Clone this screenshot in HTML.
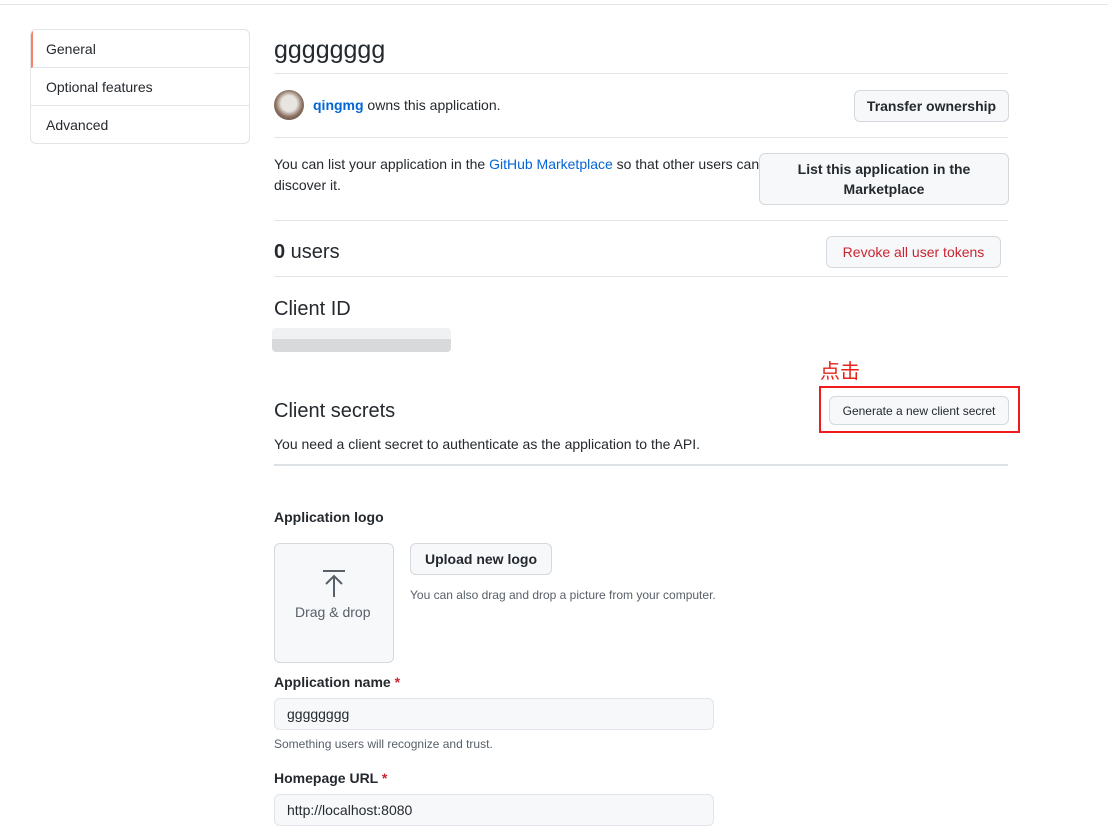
<!DOCTYPE html>
<html><head><meta charset="utf-8"><style>
*{box-sizing:border-box;margin:0;padding:0}
body{width:1108px;height:823px;overflow:hidden;background:#fff;font-family:"Liberation Sans",sans-serif;color:#24292e;font-size:14px;position:relative}
.a{position:absolute;white-space:nowrap}
.hr{position:absolute;left:274px;width:734px;height:1px;background:#e1e4e8}
.btn{position:absolute;background:#f6f8fa;border:1px solid #d5d8dc;border-radius:6px;font-weight:bold;font-size:14px;display:flex;align-items:center;justify-content:center;text-align:center;color:#24292e}
.side{position:absolute;left:30px;top:29px;width:220px;height:115px;border:1px solid #e1e4e8;border-radius:6px;overflow:hidden}
.side div{height:38px;line-height:38px;padding-left:15px;border-bottom:1px solid #e1e4e8;font-size:14px}
.side div:last-child{border-bottom:none}
.inp{position:absolute;left:274px;width:440px;height:32px;border:1px solid #e1e4e8;border-radius:6px;background:#f6f8fa;padding-left:12px;line-height:30px;font-size:14px}
</style></head><body>
<div class="a" style="left:0;top:4px;width:1108px;height:1px;background:#e5e5e5"></div>
<div class="side">
<div style="border-left:2px solid #f9826c;padding-left:13px">General</div>
<div>Optional features</div>
<div>Advanced</div>
</div>
<div class="a" style="left:274px;top:34px;font-size:25px;line-height:32px">gggggggg</div>
<div class="hr" style="top:73px"></div>
<div class="a" style="left:274px;top:90px;width:30px;height:30px;border-radius:50%;background:radial-gradient(circle at 50% 45%,#e8e4df 0 35%,#8a7060 60%,#4a3a30 100%)"></div>
<div class="a" style="left:313px;top:96px;line-height:18px"><b style="color:#0366d6">qingmg</b> owns this application.</div>
<div class="btn" style="left:854px;top:90px;width:155px;height:32px">Transfer ownership</div>
<div class="hr" style="top:137px"></div>
<div class="a" style="left:274px;top:154px;line-height:21px;white-space:normal;width:490px">You can list your application in the <span style="color:#0366d6">GitHub Marketplace</span> so that other users can discover it.</div>
<div class="btn" style="left:759px;top:153px;width:250px;height:52px;line-height:20px">List this application in the<br>Marketplace</div>
<div class="hr" style="top:220px"></div>
<div class="a" style="left:274px;top:240px;font-size:20px;line-height:24px"><b>0</b> users</div>
<div class="btn" style="left:826px;top:236px;width:175px;height:32px;color:#cb2431;font-weight:normal">Revoke all user tokens</div>
<div class="hr" style="top:276px"></div>
<div class="a" style="left:274px;top:297px;font-size:20px;line-height:24px">Client ID</div>
<div class="a" style="left:272px;top:328px;width:179px;height:24px;border-radius:4px;background:linear-gradient(#f0f1f2 0 45%,#d8d9db 45% 100%)"></div>
<div class="a" style="left:820px;top:358px;font-size:20px;line-height:24px;color:#e8231a;font-family:'Noto Sans CJK SC',sans-serif">点击</div>
<div class="a" style="left:819px;top:386px;width:201px;height:47px;border:2px solid #f01c1c"></div>
<div class="btn" style="left:829px;top:396px;width:180px;height:29px;font-size:12px;font-weight:normal">Generate a new client secret</div>
<div class="a" style="left:274px;top:399px;font-size:20px;line-height:24px">Client secrets</div>
<div class="a" style="left:274px;top:435px;line-height:18px">You need a client secret to authenticate as the application to the API.</div>
<div class="a" style="left:274px;top:464px;width:734px;height:2px;background:#dfe2e5"></div>
<div class="a" style="left:274px;top:508px;font-weight:bold;line-height:18px">Application logo</div>
<div class="a" style="left:274px;top:543px;width:120px;height:120px;border:1px solid #d5d8dc;border-radius:6px;background:#f6f8fa"></div>
<svg class="a" style="left:320px;top:569px" width="28" height="30" viewBox="0 0 28 30"><path d="M3 2H25M14 28V7M6 15L14 7L22 15" fill="none" stroke="#586069" stroke-width="2"/></svg>
<div class="a" style="left:295px;top:603px;color:#586069;line-height:18px">Drag &amp; drop</div>
<div class="btn" style="left:410px;top:543px;width:142px;height:32px">Upload new logo</div>
<div class="a" style="left:410px;top:587px;font-size:12px;color:#586069;line-height:16px">You can also drag and drop a picture from your computer.</div>
<div class="a" style="left:274px;top:673px;font-weight:bold;line-height:18px">Application name <span style="color:#cb2431">*</span></div>
<div class="inp" style="top:698px">gggggggg</div>
<div class="a" style="left:274px;top:736px;font-size:12px;color:#586069;line-height:16px">Something users will recognize and trust.</div>
<div class="a" style="left:274px;top:769px;font-weight:bold;line-height:18px">Homepage URL <span style="color:#cb2431">*</span></div>
<div class="inp" style="top:794px">http://localhost:8080</div>
</body></html>
